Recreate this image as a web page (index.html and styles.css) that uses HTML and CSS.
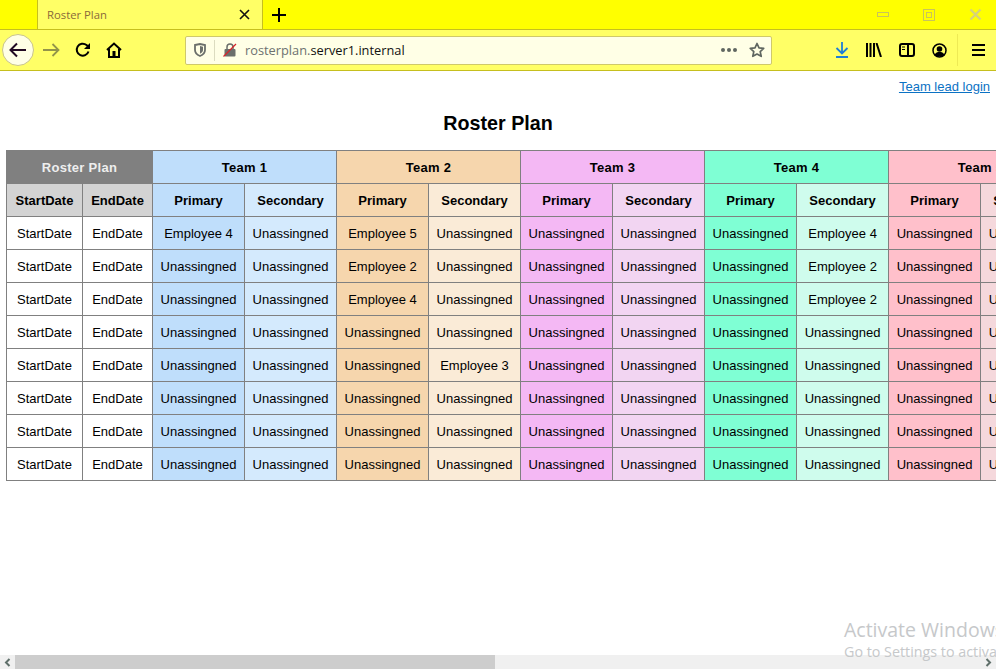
FILE: index.html
```html
<!DOCTYPE html>
<html>
<head>
  <meta charset="UTF-8">
  <title>Roster Plan</title>
  <link rel="stylesheet" href="styles.css">
</head>
<body>
  <div class="tabbar">
    <div class="tab">
      <span class="tab-title">Roster Plan</span>
      <svg class="tab-close" width="11" height="11" viewBox="0 0 11 11"><path d="M1 1l9 9M10 1l-9 9" stroke="#111" stroke-width="1.600" fill="none"/></svg>
    </div>
    <svg class="new-tab" width="14" height="14" viewBox="0 0 14 14"><path d="M7 0v14M0 7h14" stroke="#000" stroke-width="2" fill="none"/></svg>
    <div class="win-buttons">
      <svg width="12" height="5" viewBox="0 0 12 5"><rect x="0.500" y="0.500" width="11" height="4" fill="none" stroke="#c9c45a"/></svg>
      <svg width="12" height="12" viewBox="0 0 12 12"><rect x="0.500" y="0.500" width="11" height="11" fill="none" stroke="#c9c45a"/><rect x="3.500" y="3.500" width="5" height="5" fill="none" stroke="#c9c45a"/></svg>
      <svg width="13" height="13" viewBox="0 0 13 13"><path d="M1.500 1.500l10 10M11.500 1.500l-10 10" stroke="#d6d27a" stroke-width="2.400" fill="none"/></svg>
    </div>
  </div>

  <div class="toolbar">
    <div class="back-btn">
      <svg width="18" height="16" viewBox="0 0 18 16"><path d="M17 8H2M8 1.500L1.500 8 8 14.500" stroke="#220a22" stroke-width="2" fill="none"/></svg>
    </div>
    <svg class="nav-icon" width="17" height="14" viewBox="0 0 17 14"><path d="M0 7h15M9.500 1l6 6-6 6" stroke="#93944a" stroke-width="1.800" fill="none"/></svg>
    <svg class="nav-icon" width="16" height="16" viewBox="0 0 16 16"><path d="M13.500 9.500A6 6 0 1 1 11.500 3L14 5" stroke="#000" stroke-width="2" fill="none"/><path d="M15 1v6H9z" fill="#000"/></svg>
    <svg class="nav-icon" width="16" height="16" viewBox="0 0 16 16"><path d="M1 8l7-6.500L15 8M3 7v8h10V7" stroke="#000" stroke-width="2" fill="none"/><rect x="6.500" y="9" width="3" height="6" fill="#000"/></svg>

    <div class="urlbar">
      <svg class="shield" width="12" height="14" viewBox="0 0 12 14"><path d="M1 2l5-1 5 1v5c0 3-2.500 5-5 6-2.500-1-5-3-5-6z" fill="none" stroke="#6b6f6b" stroke-width="1.800"/><path d="M6 3l3 .7V7c0 1.800-1.500 3-3 3.800z" fill="#6b6f6b"/></svg>
      <span class="url-sep"></span>
      <svg class="lock" width="14" height="14" viewBox="0 0 14 14"><path d="M4 6V4a3 3 0 0 1 6 0v2" fill="none" stroke="#6b6f6b" stroke-width="1.500"/><rect x="1.500" y="6" width="11" height="7.500" rx="1" fill="#6b6f6b"/><path d="M0.500 13.500L13 1" stroke="#d8242a" stroke-width="1.200"/></svg>
      <span class="url"><span class="url-dim">rosterplan.</span>server1.internal</span>
      <span class="url-dots">
        <i></i><i></i><i></i>
      </span>
      <svg class="star" width="16" height="16" viewBox="0 0 16 16"><path d="M8 1.500l2 4.400 4.700.5-3.500 3.200 1 4.700L8 12l-4.200 2.300 1-4.700L1.300 6.400 6 5.900z" fill="none" stroke="#5f6660" stroke-width="1.700" stroke-linejoin="round"/></svg>
    </div>

    <div class="tools">
      <svg width="14" height="16" viewBox="0 0 14 16"><path d="M7 0v11M1.500 6L7 11.500 12.500 6" stroke="#1f7fd6" stroke-width="1.800" fill="none"/><path d="M1 15h12" stroke="#1f7fd6" stroke-width="2"/></svg>
      <svg width="16" height="14" viewBox="0 0 16 14"><path d="M1 0v14M4.500 0v14M8 0v14M10.500 0l4.500 14" stroke="#000" stroke-width="2" fill="none"/></svg>
      <svg width="16" height="14" viewBox="0 0 16 14"><rect x="1" y="1" width="14" height="12" rx="2" fill="none" stroke="#000" stroke-width="2"/><path d="M9 1v12" stroke="#000" stroke-width="2"/><path d="M3 4h3M3 6.500h3" stroke="#000"/></svg>
      <svg width="15" height="15" viewBox="0 0 15 15"><circle cx="7.500" cy="7.500" r="6.500" fill="none" stroke="#000" stroke-width="1.500"/><circle cx="7.500" cy="6" r="2.800"/><path d="M2.500 12c1-2.500 3-3 5-3s4 .5 5 3l-2 1.500h-6z"/></svg>
      <span class="tool-sep"></span>
      <svg width="13" height="12" viewBox="0 0 13 12"><path d="M0 1h13M0 6h13M0 11h13" stroke="#000" stroke-width="2"/></svg>
    </div>
  </div>

  <div class="page">
    <a class="login" href="#">Team lead login</a>
    <h1>Roster Plan</h1>

    <table class="roster">
      <colgroup>
        <col class="c-start"><col class="c-end">
        <col class="c-team"><col class="c-team"><col class="c-team"><col class="c-team"><col class="c-team">
        <col class="c-team"><col class="c-team"><col class="c-team"><col class="c-team"><col class="c-team">
      </colgroup>
      <tr class="team-row">
        <th colspan="2" class="plan">Roster Plan</th>
        <th colspan="2" class="t1">Team 1</th>
        <th colspan="2" class="t2">Team 2</th>
        <th colspan="2" class="t3">Team 3</th>
        <th colspan="2" class="t4">Team 4</th>
        <th colspan="2" class="t5">Team 5</th>
      </tr>
      <tr>
        <th class="date">StartDate</th><th class="date">EndDate</th>
        <th class="t1">Primary</th><th class="t1b">Secondary</th>
        <th class="t2">Primary</th><th class="t2b">Secondary</th>
        <th class="t3">Primary</th><th class="t3b">Secondary</th>
        <th class="t4">Primary</th><th class="t4b">Secondary</th>
        <th class="t5">Primary</th><th class="t5b">Secondary</th>
      </tr>
      <tr>
        <td>StartDate</td><td>EndDate</td>
        <td class="t1">Employee 4</td><td class="t1b">Unassingned</td>
        <td class="t2">Employee 5</td><td class="t2b">Unassingned</td>
        <td class="t3">Unassingned</td><td class="t3b">Unassingned</td>
        <td class="t4">Unassingned</td><td class="t4b">Employee 4</td>
        <td class="t5">Unassingned</td><td class="t5b">Unassingned</td>
      </tr>
      <tr>
        <td>StartDate</td><td>EndDate</td>
        <td class="t1">Unassingned</td><td class="t1b">Unassingned</td>
        <td class="t2">Employee 2</td><td class="t2b">Unassingned</td>
        <td class="t3">Unassingned</td><td class="t3b">Unassingned</td>
        <td class="t4">Unassingned</td><td class="t4b">Employee 2</td>
        <td class="t5">Unassingned</td><td class="t5b">Unassingned</td>
      </tr>
      <tr>
        <td>StartDate</td><td>EndDate</td>
        <td class="t1">Unassingned</td><td class="t1b">Unassingned</td>
        <td class="t2">Employee 4</td><td class="t2b">Unassingned</td>
        <td class="t3">Unassingned</td><td class="t3b">Unassingned</td>
        <td class="t4">Unassingned</td><td class="t4b">Employee 2</td>
        <td class="t5">Unassingned</td><td class="t5b">Unassingned</td>
      </tr>
      <tr>
        <td>StartDate</td><td>EndDate</td>
        <td class="t1">Unassingned</td><td class="t1b">Unassingned</td>
        <td class="t2">Unassingned</td><td class="t2b">Unassingned</td>
        <td class="t3">Unassingned</td><td class="t3b">Unassingned</td>
        <td class="t4">Unassingned</td><td class="t4b">Unassingned</td>
        <td class="t5">Unassingned</td><td class="t5b">Unassingned</td>
      </tr>
      <tr>
        <td>StartDate</td><td>EndDate</td>
        <td class="t1">Unassingned</td><td class="t1b">Unassingned</td>
        <td class="t2">Unassingned</td><td class="t2b">Employee 3</td>
        <td class="t3">Unassingned</td><td class="t3b">Unassingned</td>
        <td class="t4">Unassingned</td><td class="t4b">Unassingned</td>
        <td class="t5">Unassingned</td><td class="t5b">Unassingned</td>
      </tr>
      <tr>
        <td>StartDate</td><td>EndDate</td>
        <td class="t1">Unassingned</td><td class="t1b">Unassingned</td>
        <td class="t2">Unassingned</td><td class="t2b">Unassingned</td>
        <td class="t3">Unassingned</td><td class="t3b">Unassingned</td>
        <td class="t4">Unassingned</td><td class="t4b">Unassingned</td>
        <td class="t5">Unassingned</td><td class="t5b">Unassingned</td>
      </tr>
      <tr>
        <td>StartDate</td><td>EndDate</td>
        <td class="t1">Unassingned</td><td class="t1b">Unassingned</td>
        <td class="t2">Unassingned</td><td class="t2b">Unassingned</td>
        <td class="t3">Unassingned</td><td class="t3b">Unassingned</td>
        <td class="t4">Unassingned</td><td class="t4b">Unassingned</td>
        <td class="t5">Unassingned</td><td class="t5b">Unassingned</td>
      </tr>
      <tr>
        <td>StartDate</td><td>EndDate</td>
        <td class="t1">Unassingned</td><td class="t1b">Unassingned</td>
        <td class="t2">Unassingned</td><td class="t2b">Unassingned</td>
        <td class="t3">Unassingned</td><td class="t3b">Unassingned</td>
        <td class="t4">Unassingned</td><td class="t4b">Unassingned</td>
        <td class="t5">Unassingned</td><td class="t5b">Unassingned</td>
      </tr>
    </table>
  </div>

  <div class="hscroll">
    <svg class="arrow" width="7" height="9" viewBox="0 0 7 9"><path d="M5.500 1L2 4.500 5.500 8" stroke="#5f6f6a" stroke-width="2" fill="none"/></svg>
    <div class="thumb"></div>
    <svg class="arrow arrow-right" width="7" height="9" viewBox="0 0 7 9"><path d="M1.500 1L5 4.500 1.500 8" stroke="#5f6f6a" stroke-width="2" fill="none"/></svg>
  </div>

  <div class="watermark">
    <div class="wm-big">Activate Windows</div>
    <div class="wm-small">Go to Settings to activate Windows.</div>
  </div>
</body>
</html>
```

FILE: styles.css
```css
html, body {
  margin: 0;
  height: 100%;
}

body {
  position: relative;
  display: flex;
  flex-direction: column;
  overflow: hidden;
  background: #fff;
  font-family: "Liberation Sans", Arial, sans-serif;
}

/* browser chrome */
.tabbar {
  flex: 0 0 29px;
  display: flex;
  align-items: center;
  background: #ffff00;
  padding-left: 37px;
}

.tab {
  width: 226px;
  height: 29px;
  box-sizing: border-box;
  display: flex;
  align-items: center;
  justify-content: space-between;
  padding: 0 12px 0 9px;
  background: #ffff66;
  border-left: 1px solid #c6bf1e;
  border-right: 1px solid #c6bf1e;
}

.tab-title {
  font: 11.300px "Open Sans", sans-serif;
  color: #8a6a3a;
}

.new-tab {
  margin-left: 9px;
}

.win-buttons {
  margin-left: auto;
  display: flex;
  align-items: center;
  gap: 34px;
  padding-right: 14px;
}

.toolbar {
  flex: 0 0 42px;
  box-sizing: border-box;
  display: flex;
  align-items: center;
  background: #ffff66;
  border-top: 1px solid #c6bf1e;
  border-bottom: 1px solid #c6bf1e;
}

.back-btn {
  width: 32px;
  height: 32px;
  margin-left: 2px;
  box-sizing: border-box;
  border: 1px solid #c9c48a;
  border-radius: 50%;
  background: #ffffe6;
  display: flex;
  align-items: center;
  justify-content: center;
}

.nav-icon {
  margin-left: 9px;
}

.nav-icon + .nav-icon {
  margin-left: 15px;
}

.urlbar {
  width: 587px;
  height: 29px;
  margin-left: 63px;
  box-sizing: border-box;
  display: flex;
  align-items: center;
  padding: 0 6px 0 8px;
  background: #ffffe6;
  border: 1px solid #cfc96a;
  border-radius: 2px;
}

.url-sep {
  width: 1px;
  height: 21px;
  margin: 0 8px 0 8px;
  background: #dcdcc0;
}

.url {
  margin-left: 8px;
  font: 12.800px "Open Sans", sans-serif;
  color: #111;
}

.url-dim {
  color: #6d7170;
}

.url-dots {
  margin-left: auto;
  display: flex;
  gap: 2px;
}

.url-dots i {
  width: 4px;
  height: 4px;
  border-radius: 50%;
  background: #5f6660;
}

.star {
  margin-left: 12px;
}

.tools {
  display: flex;
  align-items: center;
  gap: 17px;
  margin-left: 63px;
}

.tool-sep {
  width: 1px;
  height: 32px;
  margin: 0 -3px 0 -7px;
  background: #eeea55;
}

/* page */
.page {
  flex: 1;
  overflow: hidden;
  min-height: 0;
}

.login {
  display: block;
  padding: 8px 6px 0 0;
  text-align: right;
  font-size: 13px;
  line-height: 16px;
  color: #0b72c4;
}

h1 {
  margin: 17px 0 15px;
  text-align: center;
  font-size: 19.700px;
  line-height: 23px;
  color: #000;
}

.roster {
  margin-left: 6px;
  border-collapse: collapse;
  table-layout: fixed;
  width: 1066px;
  font-size: 13px;
  color: #000;
}

.c-start { width: 76px; }
.c-end { width: 70px; }
.c-team { width: 92px; }

.roster th,
.roster td {
  height: 33px;
  padding: 0;
  box-sizing: border-box;
  border: 1px solid #808080;
  text-align: center;
  white-space: nowrap;
  overflow: hidden;
}

.team-row th {
  letter-spacing: 0.3px;
}

.roster th.plan {
  background: #808080;
  color: #eee;
}

.roster th.date { background: #d3d3d3; }

.t1 { background: #bfdefb; }
.t1b { background: #d4eafd; }
.t2 { background: #f6d6ad; }
.t2b { background: #faebd7; }
.t3 { background: #f4b8f4; }
.t3b { background: #f2d5f2; }
.t4 { background: #7fffd4; }
.t4b { background: #cffced; }
.t5 { background: #ffc0cb; }
.t5b { background: #f5d8dc; }

.watermark {
  position: absolute;
  left: 844px;
  bottom: 7px;
  white-space: nowrap;
  font-family: "Open Sans", sans-serif;
  color: #c6c8ca;
}

.wm-big {
  font-size: 19.500px;
  line-height: 25px;
}

.wm-small {
  font-size: 14.300px;
  line-height: 20px;
}

.hscroll {
  flex: 0 0 14px;
  display: flex;
  align-items: center;
  background: #f0f0f0;
}

.arrow {
  flex: 0 0 15px;
}

.arrow-right {
  margin-left: auto;
}

.thumb {
  width: 480px;
  height: 14px;
  background: #cdcdcd;
}
```
